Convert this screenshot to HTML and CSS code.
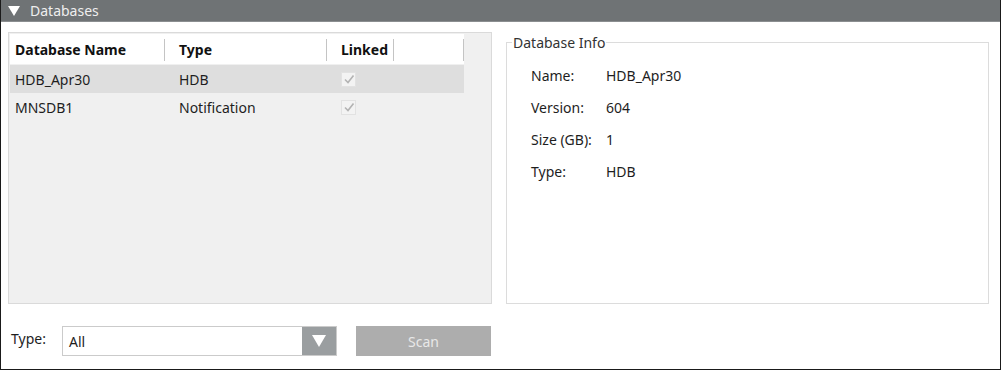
FILE: index.html
```html
<!DOCTYPE html>
<html lang="en">

<head>
    <meta charset="UTF-8">
    <title>Databases</title>
    <link rel="stylesheet" href="styles.css">
</head>

<body>
    <div class="frame">
        <!-- Title bar -->
        <div class="titlebar">
            <svg class="caret" width="12" height="10" viewBox="0 0 12 10"><polygon points="0,0 12,0 6,10" fill="#ffffff"/></svg>
            <span>Databases</span>
        </div>

        <!-- Main -->
        <div class="content">
            <div class="grid-box">
                <div class="grid">
                    <div class="head first">Database Name</div>
                    <div class="head">Type</div>
                    <div class="head">Linked</div>
                    <div class="head"></div>

                    <div class="cell first selected">HDB_Apr30</div>
                    <div class="cell selected">HDB</div>
                    <div class="cell selected">
                        <span class="check"><svg width="12" height="12" viewBox="0 0 12 12"><polyline points="2,6.5 5,9.5 10.5,2.5" fill="none" stroke="#b3b3b3" stroke-width="1.6"/></svg></span>
                    </div>
                    <div class="cell selected"></div>

                    <div class="cell first">MNSDB1</div>
                    <div class="cell">Notification</div>
                    <div class="cell">
                        <span class="check"><svg width="12" height="12" viewBox="0 0 12 12"><polyline points="2,6.5 5,9.5 10.5,2.5" fill="none" stroke="#b3b3b3" stroke-width="1.6"/></svg></span>
                    </div>
                    <div class="cell"></div>
                </div>
            </div>

            <fieldset class="info">
                <legend>Database Info</legend>
                <div class="info-rows">
                    <span>Name:</span><span>HDB_Apr30</span>
                    <span>Version:</span><span>604</span>
                    <span>Size (GB):</span><span>1</span>
                    <span>Type:</span><span>HDB</span>
                </div>
            </fieldset>
        </div>

        <!-- Bottom bar -->
        <div class="bottom">
            <label class="type-label">Type:</label>
            <div class="combo">
                <span class="combo-text">All</span>
                <span class="combo-btn"><svg width="14" height="12" viewBox="0 0 14 12"><polygon points="0,0 14,0 7,12" fill="#ffffff"/></svg></span>
            </div>
            <button class="scan">Scan</button>
        </div>
    </div>
</body>

</html>
```

FILE: styles.css
```css
* {
    margin: 0;
    padding: 0;
    box-sizing: border-box;
}

body {
    font-family: "Noto Sans", "Open Sans", sans-serif;
    font-size: 14px;
    color: #1e1e1e;
    background: #ffffff;
}

.frame {
    width: 1001px;
    height: 370px;
    border: 1px solid #1a1a1a;
    border-top: none;
    display: flex;
    flex-direction: column;
}

.titlebar {
    height: 22px;
    background-color: #6f7375;
    color: #eeeeee;
    display: flex;
    align-items: center;
    padding-left: 7px;
    gap: 10px;
    border-bottom: 1px solid #8b8e90;
}

.titlebar span {
    font-size: 14px;
    line-height: 1;
}

.content {
    display: flex;
    align-items: flex-start;
    gap: 14px;
    padding: 10px 0 0 7px;
}

.grid-box {
    width: 484px;
    height: 272px;
    background: #f0f0f0;
    border: 1px solid #dadada;
    padding: 1px;
}

.grid {
    display: grid;
    grid-template-columns: 155px 162px 67px 70px;
    grid-template-rows: 31px 28px 28px;
    width: 456px;
}

.head {
    height: 30px;
    background: #ffffff;
    font-weight: bold;
    display: flex;
    align-items: center;
    padding-left: 14px;
    position: relative;
    color: #111;
}

.head::after {
    content: "";
    position: absolute;
    right: 0;
    top: 5px;
    bottom: 3px;
    border-right: 1px solid #c4c4c4;
}

.cell {
    display: flex;
    align-items: center;
    padding-left: 14px;
}

.grid .first {
    padding-left: 5px;
}

.selected {
    background: #dedede;
}

.check {
    width: 15px;
    height: 15px;
    border: 1px solid #e2e2e2;
    background: #f3f3f3;
    display: flex;
    align-items: center;
    justify-content: center;
}

.info {
    width: 483px;
    height: 271px;
    border: 1px solid #dcdcdc;
    padding: 0 0 0 5px;
    margin-top: 1px;
}

.info legend {
    padding: 0 1px;
    color: #333333;
}

.info-rows {
    display: grid;
    grid-template-columns: 75px auto;
    grid-auto-rows: 32px;
    align-items: center;
    padding: 7px 0 0 19px;
}

.bottom {
    display: flex;
    align-items: center;
    margin-top: 22px;
    padding-left: 10px;
}

.type-label {
    width: 51px;
    margin-top: -6px;
}

.combo {
    width: 275px;
    height: 30px;
    border: 1px solid #cbcbcb;
    display: flex;
    align-items: center;
    justify-content: space-between;
}

.combo-text {
    padding-left: 6px;
}

.combo-btn {
    width: 34px;
    height: 28px;
    background: #9a9ea0;
    display: flex;
    align-items: center;
    justify-content: center;
}

.scan {
    margin-left: 19px;
    width: 135px;
    height: 30px;
    border: none;
    background: #adadad;
    color: #e8e8e8;
    font-family: inherit;
    font-size: 14px;
}
```
